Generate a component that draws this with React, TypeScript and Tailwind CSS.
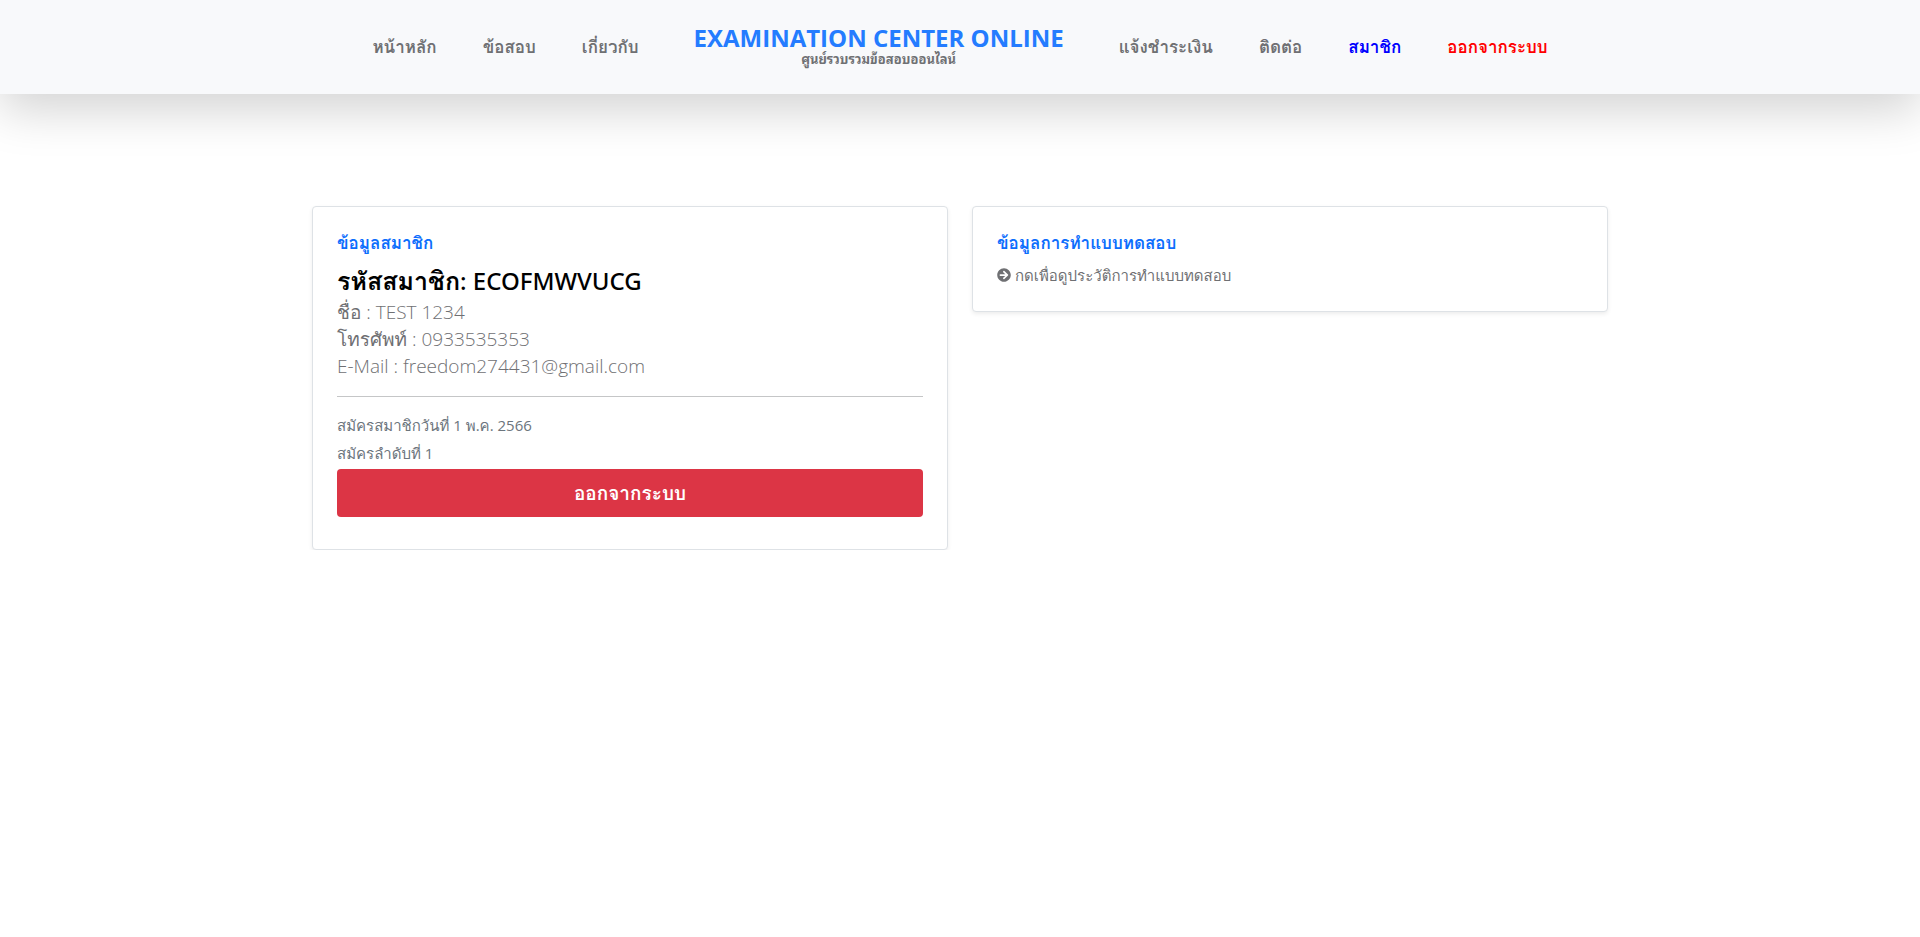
import { FaArrowCircleRight } from "react-icons/fa";

type NavItem = { label: string; color: string };

const leftItems: NavItem[] = [
  { label: "หน้าหลัก", color: "text-[#6f7073]" },
  { label: "ข้อสอบ", color: "text-[#6f7073]" },
  { label: "เกี่ยวกับ", color: "text-[#6f7073]" },
];

const rightItems: NavItem[] = [
  { label: "แจ้งชำระเงิน", color: "text-[#6f7073]" },
  { label: "ติดต่อ", color: "text-[#6f7073]" },
  { label: "สมาชิก", color: "text-[#0000ff]" },
  { label: "ออกจากระบบ", color: "text-[#ff0000]" },
];

function NavLinks({ items }: { items: NavItem[] }) {
  return (
    <ul className="flex gap-[46px]">
      {items.map((item) => (
        <li key={item.label}>
          <a href="#" className={`text-[17px] font-bold whitespace-nowrap ${item.color}`}>
            {item.label}
          </a>
        </li>
      ))}
    </ul>
  );
}

export default function App() {
  return (
    <div className="bg-white font-['Open_Sans','Loma',sans-serif] text-[15px] text-[#6f7073]">
      <header className="bg-[#f8f9fb] shadow-[0_16px_48px_rgba(0,0,0,0.175)]">
        <nav className="flex h-[94px] items-center justify-center gap-[55px]">
          <NavLinks items={leftItems} />
          <a href="#" className="flex flex-col items-center pb-0.5 font-bold">
            <span className="text-2xl leading-[26px] whitespace-nowrap text-[#247cff]">EXAMINATION CENTER ONLINE</span>
            <span className="font-['Noto_Sans_Thai_Looped','Noto_Looped_Thai',sans-serif] text-[13px] leading-4">
              ศูนย์รวบรวมข้อสอบออนไลน์
            </span>
          </a>
          <NavLinks items={rightItems} />
        </nav>
      </header>

      <main className="mx-auto grid max-w-[1320px] grid-cols-1 items-start gap-6 px-3 pt-28 lg:grid-cols-2">
        <section className="rounded border border-[#dee2e6] bg-white px-6 pt-6 pb-8 shadow-[0_2px_4px_rgba(0,0,0,0.075)]">
          <h2 className="mb-2 text-[17px] leading-6 font-bold text-[#0d6efd]">ข้อมูลสมาชิก</h2>
          <h3 className="text-2xl leading-9 text-black">
            <span className="text-[25px] leading-none font-bold">รหัสสมาชิก</span>
            <span className="font-['Noto_Sans',sans-serif] leading-none font-medium">: ECOFMWVUCG</span>
          </h3>
          <div className="text-[19px] leading-[27px] font-light">
            <p>ชื่อ : TEST 1234</p>
            <p>โทรศัพท์ : 0933535353</p>
            <p>E-Mail : freedom274431@gmail.com</p>
          </div>
          <hr className="mt-4 mb-3.5 border-[#c5c6c7]" />
          <div className="mb-0.5 leading-7 text-[#6c757d]">
            <p>สมัครสมาชิกวันที่ 1 พ.ค. 2566</p>
            <p>สมัครลำดับที่ 1</p>
          </div>
          <button type="button" className="h-12 w-full rounded bg-[#dc3545] text-[19px] font-bold text-white">
            ออกจากระบบ
          </button>
        </section>

        <section className="rounded border border-[#dee2e6] bg-white p-6 shadow-[0_2px_4px_rgba(0,0,0,0.075)]">
          <h2 className="mb-2 text-[17px] leading-6 font-bold text-[#0d6efd]">ข้อมูลการทำแบบทดสอบ</h2>
          <a href="#" className="flex items-center gap-1 leading-6">
            <FaArrowCircleRight className="size-[14px]" />
            กดเพื่อดูประวัติการทำแบบทดสอบ
          </a>
        </section>
      </main>
    </div>
  );
}
